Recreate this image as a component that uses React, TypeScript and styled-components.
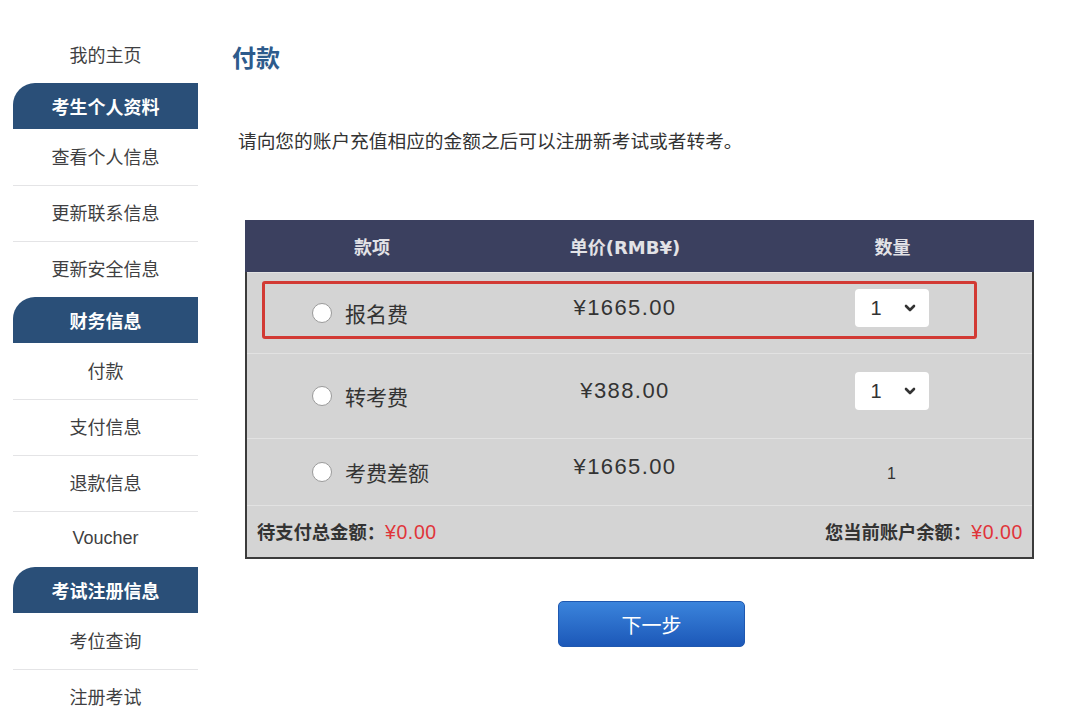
import React from "react";
import styled, { createGlobalStyle } from "styled-components";

const Global = createGlobalStyle`
  html, body { margin: 0; padding: 0; background: #ffffff; }
  body { font-family: "Liberation Sans", "Noto Sans CJK SC", sans-serif; color: #333; }
`;

const Page = styled.div`
  display: flex;
  width: 1080px;
  height: 715px;
  overflow: hidden;
  background: #fff;
`;

const Sidebar = styled.nav`
  width: 185px;
  margin-left: 13px;
  padding-top: 27px;
  display: flex;
  flex-direction: column;
  flex-shrink: 0;
`;

const NavItem = styled.div`
  height: 56px;
  flex-shrink: 0;
  box-sizing: border-box;
  display: flex;
  align-items: center;
  justify-content: center;
  font-size: 18px;
  color: #3f3f42;
  font-family: "Liberation Sans", "Noto Sans CJK SC", sans-serif;
  padding-bottom: 3px;
  & + & {
    border-top: 1px solid #e4e4e6;
  }
`;

const NavHeader = styled.div`
  height: 46px;
  flex-shrink: 0;
  display: flex;
  align-items: center;
  justify-content: center;
  background: #2a4f78;
  color: #fff;
  font-weight: 700;
  font-size: 18px;
  border-top-left-radius: 22px;
`;

const Main = styled.main`
  flex: 1;
  padding-left: 34px;
  padding-top: 42px;
  display: flex;
  flex-direction: column;
`;

const Title = styled.h1`
  margin: 0;
  font-size: 24px;
  line-height: 34px;
  font-weight: 700;
  color: #2d5b8c;
`;

const Intro = styled.p`
  margin: 52px 0 0 6px;
  font-size: 18.7px;
  line-height: 28px;
  color: #333;
`;

const Table = styled.div`
  margin: 64px 0 0 13px;
  width: 789px;
  box-sizing: border-box;
  border: 2px solid #3b3b3b;
  border-top: none;
  background: #d4d4d4;
`;

const Row = styled.div<{ $h: number }>`
  position: relative;
  display: grid;
  grid-template-columns: 252px 252px 1fr;
  height: ${(p) => p.$h}px;
  align-items: center;
  & + & {
    border-top: 1px solid #e2e2e2;
  }
`;

const HeadRow = styled(Row)`
  background: #3b405f;
  color: #e2e2e6;
  font-weight: 700;
  font-size: 18px;
  font-family: "DejaVu Sans", "Noto Sans CJK SC", sans-serif;
  margin: 0 -2px;
  grid-template-columns: 254px 252px 1fr;
`;

const HeadCell = styled.div`
  text-align: center;
`;

const ItemCell = styled.label`
  display: flex;
  align-items: center;
  padding-left: 65px;
  gap: 13px;
  font-size: 21px;
  color: #333;
`;

const Radio = styled.span`
  width: 20px;
  height: 20px;
  border-radius: 50%;
  background: #fff;
  border: 1px solid #9a9a9a;
  box-sizing: border-box;
`;

const Price = styled.div`
  text-align: center;
  font-size: 22px;
  letter-spacing: 1.4px;
  color: #333;
  padding-bottom: 10px;
`;

const QtyCell = styled.div`
  display: flex;
  justify-content: center;
  padding-bottom: 10px;
`;

const Select = styled.div`
  width: 74px;
  height: 38px;
  background: #fff;
  border-radius: 4px;
  display: flex;
  align-items: center;
  justify-content: space-between;
  padding: 0 13px 0 16px;
  box-sizing: border-box;
  font-size: 20px;
  color: #333;
`;

const QtyText = styled.div`
  text-align: center;
  font-size: 16px;
  color: #333;
  padding-top: 4px;
`;

const Highlight = styled.div`
  position: absolute;
  left: 15px;
  top: 8px;
  width: 715px;
  height: 58px;
  border: 3px solid #d23a34;
  border-radius: 3px;
  box-sizing: border-box;
  pointer-events: none;
`;

const Footer = styled.div`
  height: 52px;
  display: flex;
  align-items: center;
  justify-content: space-between;
  padding: 0 9px 2px 10px;
  box-sizing: border-box;
  border-top: 1px solid #e2e2e2;
  font-size: 18.3px;
  font-weight: 700;
  color: #333;
`;

const Red = styled.span`
  color: #e0343a;
  font-weight: 400;
  font-size: 19.5px;
  letter-spacing: 0.6px;
`;

const ButtonWrap = styled.div`
  width: 789px;
  margin-left: 13px;
  margin-top: 42px;
  display: flex;
  justify-content: center;
`;

const NextButton = styled.button`
  width: 187px;
  height: 46px;
  border: 1px solid #1f58b0;
  border-radius: 5px;
  background: linear-gradient(#3b84dc, #1c58b8);
  color: #fff;
  font-size: 20px;
  font-family: "Liberation Sans", "Noto Sans CJK SC", sans-serif;
  margin-left: 24px;
`;

const Chevron = () => (
  <svg width="12" height="8" viewBox="0 0 12 8">
    <path d="M2 2 L6 6 L10 2" fill="none" stroke="#333" strokeWidth="2.6" strokeLinecap="round" strokeLinejoin="round" />
  </svg>
);

const QtySelect = () => (
  <Select>
    <span>1</span>
    <Chevron />
  </Select>
);

export default function App() {
  return (
    <Page>
      <Global />
      <Sidebar>
        <NavItem>我的主页</NavItem>
        <NavHeader>考生个人资料</NavHeader>
        <NavItem>查看个人信息</NavItem>
        <NavItem>更新联系信息</NavItem>
        <NavItem>更新安全信息</NavItem>
        <NavHeader>财务信息</NavHeader>
        <NavItem>付款</NavItem>
        <NavItem>支付信息</NavItem>
        <NavItem>退款信息</NavItem>
        <NavItem>Voucher</NavItem>
        <NavHeader>考试注册信息</NavHeader>
        <NavItem>考位查询</NavItem>
        <NavItem>注册考试</NavItem>
      </Sidebar>
      <Main>
        <Title>付款</Title>
        <Intro>请向您的账户充值相应的金额之后可以注册新考试或者转考。</Intro>
        <Table>
          <HeadRow $h={52}>
            <HeadCell>款项</HeadCell>
            <HeadCell>单价(RMB¥)</HeadCell>
            <HeadCell>数量</HeadCell>
          </HeadRow>
          <Row $h={80}>
            <ItemCell><Radio />报名费</ItemCell>
            <Price>¥1665.00</Price>
            <QtyCell><QtySelect /></QtyCell>
            <Highlight />
          </Row>
          <Row $h={84}>
            <ItemCell><Radio />转考费</ItemCell>
            <Price>¥388.00</Price>
            <QtyCell><QtySelect /></QtyCell>
          </Row>
          <Row $h={66}>
            <ItemCell><Radio />考费差额</ItemCell>
            <Price>¥1665.00</Price>
            <QtyText>1</QtyText>
          </Row>
          <Footer>
            <span>待支付总金额：<Red>¥0.00</Red></span>
            <span>您当前账户余额：<Red>¥0.00</Red></span>
          </Footer>
        </Table>
        <ButtonWrap>
          <NextButton>下一步</NextButton>
        </ButtonWrap>
      </Main>
    </Page>
  );
}
